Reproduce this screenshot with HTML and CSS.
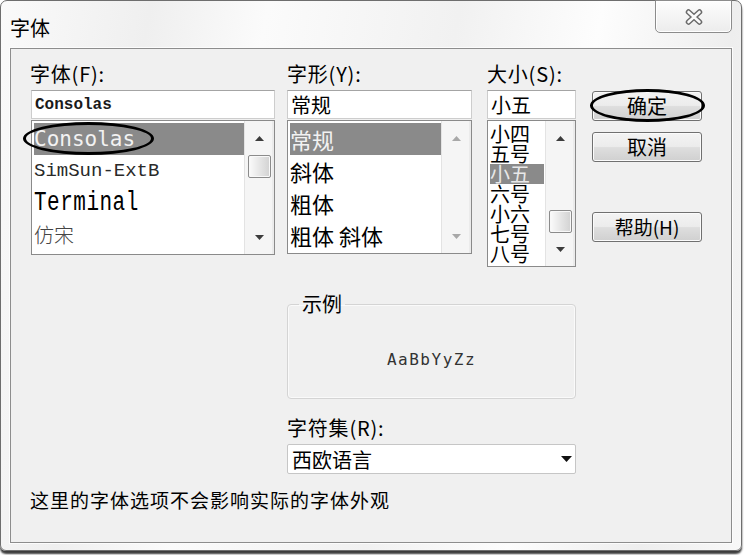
FILE: index.html
```html
<!DOCTYPE html>
<html lang="zh-CN">
<head>
<meta charset="utf-8">
<title>字体</title>
<link rel="stylesheet" href="styles.css">
</head>
<body>
<div class="window">
  <div class="titlebar">
    <span class="title">字体</span>
    <div class="close">
      <svg width="22" height="18" viewBox="0 0 22 18">
        <path d="M5.5 4 L16.5 14 M16.5 4 L5.5 14" stroke="#6a6a6a" stroke-width="5.5" stroke-linecap="round" fill="none"/>
        <path d="M5.5 4 L16.5 14 M16.5 4 L5.5 14" stroke="#fbfbfb" stroke-width="2.6" stroke-linecap="round" fill="none"/>
      </svg>
    </div>
  </div>
  <div class="client">
    <div class="grid">
      <div class="col col-font">
        <div class="label">字体(F):</div>
        <div class="input input-mono">Consolas</div>
        <div class="list list-font">
          <div class="items">
            <div class="item sel f-consolas">Consolas<span class="ring ring-list"></span></div>
            <div class="item f-simsun">SimSun-ExtB</div>
            <div class="item f-terminal"><span>Terminal</span></div>
            <div class="item f-fangsong">仿宋</div>
          </div>
          <div class="scrollbar">
            <div class="sb-btn"><svg width="9" height="5" viewBox="0 0 9 5"><polygon points="0,5 4.5,0 9,5" fill="#3c3c3c"/></svg></div>
            <div class="sb-track"><div class="thumb"></div></div>
            <div class="sb-btn"><svg width="9" height="5" viewBox="0 0 9 5"><polygon points="0,0 9,0 4.5,5" fill="#3c3c3c"/></svg></div>
          </div>
        </div>
      </div>

      <div class="col col-style">
        <div class="label">字形(Y):</div>
        <div class="input input-cjk">常规</div>
        <div class="list list-style">
          <div class="items">
            <div class="item sel f-style">常规</div>
            <div class="item f-style">斜体</div>
            <div class="item f-style">粗体</div>
            <div class="item f-style">粗体 斜体</div>
          </div>
          <div class="scrollbar">
            <div class="sb-btn"><svg width="9" height="5" viewBox="0 0 9 5"><polygon points="0,5 4.5,0 9,5" fill="#a8a8a8"/></svg></div>
            <div class="sb-track"></div>
            <div class="sb-btn"><svg width="9" height="5" viewBox="0 0 9 5"><polygon points="0,0 9,0 4.5,5" fill="#a8a8a8"/></svg></div>
          </div>
        </div>
      </div>

      <div class="col col-size">
        <div class="label">大小(S):</div>
        <div class="input input-cjk">小五</div>
        <div class="list list-size">
          <div class="items items-size">
            <div class="sitem">小四</div>
            <div class="sitem">五号</div>
            <div class="sitem sel">小五</div>
            <div class="sitem">六号</div>
            <div class="sitem">小六</div>
            <div class="sitem">七号</div>
            <div class="sitem">八号</div>
          </div>
          <div class="scrollbar scrollbar-size">
            <div class="sb-btn"><svg width="9" height="5" viewBox="0 0 9 5"><polygon points="0,5 4.5,0 9,5" fill="#3c3c3c"/></svg></div>
            <div class="sb-track"><div class="thumb"></div></div>
            <div class="sb-btn sb-btn-last"><svg width="9" height="5" viewBox="0 0 9 5"><polygon points="0,0 9,0 4.5,5" fill="#3c3c3c"/></svg></div>
          </div>
        </div>
      </div>

      <div class="col col-btns">
        <div class="btn btn-ok">确定<span class="ring ring-btn"></span></div>
        <div class="btn btn-cancel">取消</div>
        <div class="btn btn-help">帮助(H)</div>
      </div>

      <fieldset class="sample">
        <legend>示例</legend>
        <div class="sample-text">AaBbYyZz</div>
      </fieldset>

      <div class="charset">
        <div class="label">字符集(R):</div>
        <div class="combo">
          <span>西欧语言</span>
          <svg width="11" height="6" viewBox="0 0 11 6"><polygon points="0,0 11,0 5.5,6" fill="#111"/></svg>
        </div>
      </div>

      <div class="note">这里的字体选项不会影响实际的字体外观</div>
    </div>
  </div>
</div>
</body>
</html>
```

FILE: styles.css
```css
* { box-sizing: border-box; }

html, body {
  margin: 0;
  padding: 0;
}

body {
  width: 744px;
  height: 555px;
  overflow: hidden;
  background: #ffffff;
  font-family: "Noto Sans CJK SC", "Noto Sans", sans-serif;
  color: #000;
}

.window {
  width: 742px;
  height: 551px;
  border: 1px solid #6e6e6e;
  border-radius: 7px 7px 6px 6px;
  background: linear-gradient(100deg, #fafafa 0%, #efefef 18%, #fbfbfb 32%, #f1f1f1 55%, #fdfdfd 72%, #eeeeee 88%, #f8f8f8 100%);
  box-shadow: 0 3px 2px #3c3c3c;
  display: flex;
  flex-direction: column;
}

.titlebar {
  height: 47px;
  display: flex;
  justify-content: space-between;
  align-items: flex-start;
  padding-left: 9px;
}

.title {
  font-size: 20px;
  line-height: 24px;
  margin-top: 15px;
}

.close {
  width: 77px;
  height: 33px;
  margin: -1px 9px 0 0;
  border: 1px solid #8c8c8c;
  border-radius: 0 0 5px 5px;
  background: linear-gradient(#fdfdfd, #ececec);
  box-shadow: inset 0 0 0 1px #ffffff;
  display: flex;
  align-items: center;
  justify-content: center;
  padding-top: 1px;
}

.client {
  margin: 0 9px;
  height: 495px;
  border: 1px solid #8d8d8d;
  box-shadow: 0 0 0 1px #fcfcfc;
  background: #f0f0f0;
  padding: 13px 0 0 19px;
}

.grid {
  display: grid;
  grid-template-columns: 245px 12px 185px 15px 89px 16px 110px;
  align-items: start;
}

.col { display: flex; flex-direction: column; }
.col-font { grid-column: 1; grid-row: 1; }
.col-style { grid-column: 3; grid-row: 1; }
.col-size { grid-column: 5; grid-row: 1; }
.col-btns { grid-column: 7; grid-row: 1; }

.label {
  font-size: 20px;
  line-height: 24px;
  height: 24px;
  margin-bottom: 4px;
  white-space: nowrap;
  letter-spacing: 0.8px;
}

.col-font .list, .col-font .input { margin-left: 1px; }

.input {
  height: 29px;
  background: #fff;
  border: 1px solid #cdcdcd;
  border-top-color: #a4a4a4;
  padding-left: 3px;
  display: flex;
  align-items: center;
  white-space: nowrap;
}

.input-mono {
  font-family: "Liberation Mono", monospace;
  font-size: 16px;
  font-weight: bold;
  color: #1a1a1a;
}

.input-cjk {
  font-size: 20px;
}

.list {
  margin-top: 1px;
  border: 1px solid #8a8a8a;
  background: #fff;
  display: flex;
}

.list-font { height: 135px; }
.list-style { height: 134px; }
.list-size { height: 147px; }

.items {
  flex: 1;
  padding: 2px 0 0 2px;
  min-width: 0;
}

.item {
  height: 32px;
  line-height: 32px;
  white-space: nowrap;
  position: relative;
}

.sel {
  background: #8a8a8a;
  color: #f2f2f2;
}

.f-consolas {
  font-family: "DejaVu Sans Mono", monospace;
  font-size: 21px;
}

.f-simsun {
  font-family: "Liberation Mono", monospace;
  font-size: 19px;
  color: #2a2a2a;
}

.f-terminal {
  font-family: "Liberation Mono", monospace;
  font-size: 21px;
}

.f-terminal span {
  display: inline-block;
  line-height: 24px;
  letter-spacing: 0.5px;
  transform: scaleY(1.35);
  transform-origin: left center;
}

.f-fangsong {
  font-size: 20px;
  font-weight: 300;
  color: #444;
}

.f-style {
  font-size: 22px;
}

.items-size {
  padding-top: 3px;
}

.sitem {
  height: 20px;
  line-height: 20px;
  font-size: 20px;
  white-space: nowrap;
  margin-right: 1px;
}

.sitem.sel {
  color: #e8e8e8;
}

.scrollbar {
  width: 30px;
  flex: none;
  display: flex;
  flex-direction: column;
  background: linear-gradient(to right, #e3e3e3 0, #e3e3e3 1px, #f5f5f5 1px, #f5f5f5 28px, #ebebeb 28px);
}

.sb-btn {
  height: 34px;
  flex: none;
  display: flex;
  align-items: center;
  justify-content: center;
}

.scrollbar-size .sb-btn-last { height: 33px; }

.sb-track {
  flex: 1;
  display: flex;
  flex-direction: column;
  align-items: center;
}

.scrollbar-size .sb-track { justify-content: flex-end; }

.thumb {
  width: 23px;
  height: 23px;
  border: 1px solid #8b8b8b;
  border-radius: 2px;
  background: linear-gradient(to right, #fbfbfb, #e6e6e6 50%, #d2d2d2);
  box-shadow: inset 0 0 0 1px #f8f8f8;
}

.btn {
  width: 110px;
  height: 30px;
  border: 1px solid #707070;
  border-radius: 3px;
  background: linear-gradient(#f3f3f3 0%, #ececec 48%, #dedede 52%, #d0d0d0 100%);
  box-shadow: inset 0 0 0 1px #fbfbfb;
  font-size: 20px;
  line-height: 28px;
  text-align: center;
  position: relative;
  white-space: nowrap;
}

.btn-ok { margin-top: 29px; }
.btn-cancel { margin-top: 11px; }
.btn-help { margin-top: 50px; font-size: 19px; }

.ring {
  position: absolute;
  border: 3px solid #000;
  border-radius: 50%;
  pointer-events: none;
}

.ring-list {
  left: -11px;
  top: -1px;
  width: 131px;
  height: 33px;
}

.ring-btn {
  left: -3px;
  top: -3px;
  width: 115px;
  height: 33px;
}

.sample {
  grid-column: 3 / 6;
  grid-row: 2;
  margin: 27px 0 0;
  padding: 0;
  height: 105px;
  min-width: 0;
  border: 1px solid #d4d4d4;
  border-radius: 4px;
  box-shadow: inset 0 0 0 1px #fafafa;
}

.sample legend {
  margin-left: 11px;
  padding: 0 3px;
  font-size: 20px;
  line-height: 20px;
}

.sample-text {
  padding-top: 36px;
  text-align: center;
  font-family: "DejaVu Sans Mono", monospace;
  font-size: 16px;
  line-height: 20px;
  letter-spacing: 1.5px;
  color: #333;
}

.charset {
  grid-column: 3 / 6;
  grid-row: 3;
  margin-top: 17px;
}

.combo {
  height: 30px;
  background: #fff;
  border: 1px solid #c6c6c6;
  border-radius: 2px;
  display: flex;
  align-items: center;
  justify-content: space-between;
  padding: 0 3px 0 4px;
  font-size: 20px;
}

.note {
  grid-column: 1 / -1;
  grid-row: 4;
  margin-top: 14px;
  font-size: 19px;
  line-height: 24px;
  letter-spacing: 1px;
  white-space: nowrap;
}
```
